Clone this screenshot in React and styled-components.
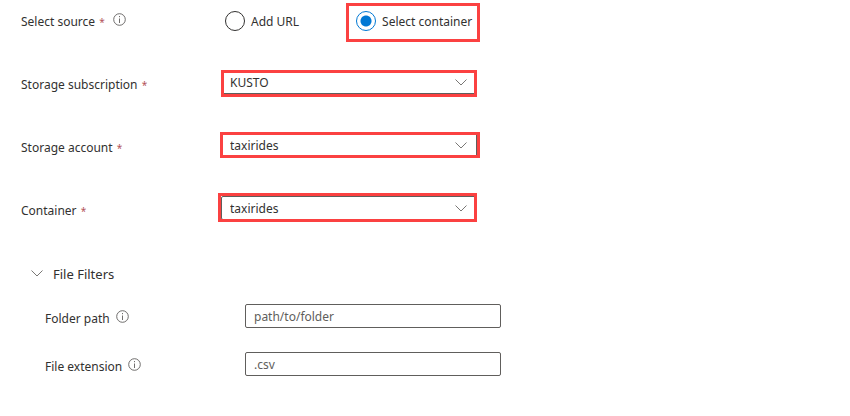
import React, { useState } from "react";
import styled, { createGlobalStyle } from "styled-components";

const GlobalStyle = createGlobalStyle`
  * { box-sizing: border-box; }
  body {
    margin: 0;
    background: #fff;
    color: #323130;
    font-family: "Noto Sans", "Open Sans", sans-serif;
    font-size: 12px;
    line-height: 18px;
  }
`;

const Form = styled.form`
  display: flex;
  flex-direction: column;
  gap: 21px;
  padding: 0 21px;
`;

const Row = styled.div`
  display: grid;
  grid-template-columns: 200px minmax(0, 1fr);
  align-items: center;
  min-height: 42px;
`;

const LabelCell = styled.div`
  display: flex;
  align-items: center;
  gap: 6px;
`;

const Label = styled.label`
  padding-top: 2px;
`;

const Required = styled.span`
  margin: 0 2px 0 1px;
  color: #b3535a;
  font-size: 10px;
`;

const InfoButton = styled.button`
  display: flex;
  margin: 0 0 4px;
  padding: 0;
  border: 0;
  background: none;
  color: #605e5c;
`;

const Field = styled.div`
  position: relative;
  width: 100%;
  max-width: 256px;
  height: 24px;
  margin-bottom: 4px;
`;

const Select = styled.select`
  display: block;
  width: 100%;
  height: 100%;
  padding: 2px 28px 0 8px;
  border: 1px solid #605e5c;
  border-radius: 2px;
  appearance: none;
  background: #fff;
  color: #323130;
  font: inherit;
`;

const SelectArrow = styled.span`
  position: absolute;
  top: 9px;
  right: 10px;
  display: flex;
  color: #797775;
  pointer-events: none;
`;

const Highlight = styled.span`
  position: absolute;
  inset: ${(p) => p.$inset};
  border: 3px solid #fb4141;
  pointer-events: none;
`;

const RadioGroup = styled.div`
  display: flex;
  gap: 57px;
  padding-left: 4px;
`;

const RadioLabel = styled.label`
  position: relative;
  display: flex;
  align-items: center;
  gap: 6px;
  white-space: nowrap;
`;

const RadioText = styled.span`
  padding-top: 2px;
`;

const Radio = styled.input`
  appearance: none;
  flex: none;
  width: 20px;
  height: 20px;
  margin: 0;
  border: 1px solid #323130;
  border-radius: 50%;
  &:checked {
    border-color: #0078d4;
    background: radial-gradient(circle, #0078d4 5px, #fff 6px);
  }
`;

const Filters = styled.section`
  display: flex;
  flex-direction: column;
  gap: 20px;
  padding: 13px 0 0 10px;
`;

const FiltersToggle = styled.button`
  display: flex;
  align-items: center;
  align-self: flex-start;
  gap: 10px;
  padding: 0;
  border: 0;
  background: none;
  color: #323130;
  font: inherit;
  font-size: 13px;
`;

const ToggleArrow = styled.span`
  display: flex;
  padding-bottom: 2px;
  color: #797775;
`;

const FilterList = styled.div`
  display: flex;
  flex-direction: column;
  gap: 20px;
  padding: 1px 0 0 14px;
`;

const FilterRow = styled(Row)`
  min-height: 28px;
`;

const TextInput = styled.input`
  display: block;
  width: 100%;
  height: 100%;
  padding: 1px 8px 0;
  border: 1px solid #605e5c;
  border-radius: 2px;
  color: #323130;
  font: inherit;
  &::placeholder { color: #605e5c; opacity: 1; }
`;

const Chevron = () => (
  <svg width="12" height="7" viewBox="0 0 12 7" fill="none" stroke="currentColor" aria-hidden="true">
    <path d="M.5.5 6 6 11.5.5" />
  </svg>
);

const Info = ({ about }) => (
  <InfoButton type="button" aria-label={`About ${about}`}>
    <svg width="13" height="13" viewBox="0 0 13 13" fill="none" stroke="currentColor">
      <circle cx="6.5" cy="6.5" r="5.8" strokeWidth=".9" />
      <path d="M6.5 5.5V10M6.5 3v1.2" strokeWidth=".9" />
    </svg>
  </InfoButton>
);

const dropdowns = [
  { id: "subscription", label: "Storage subscription", value: "KUSTO", inset: "0 0 -3px 0" },
  { id: "account", label: "Storage account", value: "taxirides", inset: "-1px -3px -1px -1px" },
  { id: "container", label: "Container", value: "taxirides", inset: "-3px 0 -2px -3px" },
];

const filters = [
  { id: "folder", label: "Folder path", placeholder: "path/to/folder" },
  { id: "extension", label: "File extension", placeholder: ".csv" },
];

export default function App() {
  const [source, setSource] = useState("container");
  const [open, setOpen] = useState(true);

  return (
    <>
      <GlobalStyle />
      <Form>
        <Row>
          <LabelCell>
            <Label as="span" id="source-label">Select source <Required>*</Required></Label>
            <Info about="Select source" />
          </LabelCell>
          <RadioGroup role="radiogroup" aria-labelledby="source-label">
            <RadioLabel>
              <Radio type="radio" name="source" checked={source === "url"} onChange={() => setSource("url")} />
              <RadioText>Add URL</RadioText>
            </RadioLabel>
            <RadioLabel>
              <Radio type="radio" name="source" checked={source === "container"} onChange={() => setSource("container")} />
              <RadioText>Select container</RadioText>
              <Highlight $inset="-8px -8px -11px -10px" />
            </RadioLabel>
          </RadioGroup>
        </Row>
        {dropdowns.map((d) => (
          <Row key={d.id}>
            <Label htmlFor={d.id}>{d.label} <Required>*</Required></Label>
            <Field>
              <Select id={d.id} defaultValue={d.value}>
                <option>{d.value}</option>
              </Select>
              <SelectArrow><Chevron /></SelectArrow>
              <Highlight $inset={d.inset} />
            </Field>
          </Row>
        ))}
        <Filters>
          <FiltersToggle type="button" aria-expanded={open} onClick={() => setOpen(!open)}>
            <ToggleArrow><Chevron /></ToggleArrow>
            File Filters
          </FiltersToggle>
          {open && (
            <FilterList>
              {filters.map((f) => (
                <FilterRow key={f.id}>
                  <LabelCell>
                    <Label htmlFor={f.id}>{f.label}</Label>
                    <Info about={f.label} />
                  </LabelCell>
                  <Field>
                    <TextInput id={f.id} placeholder={f.placeholder} />
                  </Field>
                </FilterRow>
              ))}
            </FilterList>
          )}
        </Filters>
      </Form>
    </>
  );
}
